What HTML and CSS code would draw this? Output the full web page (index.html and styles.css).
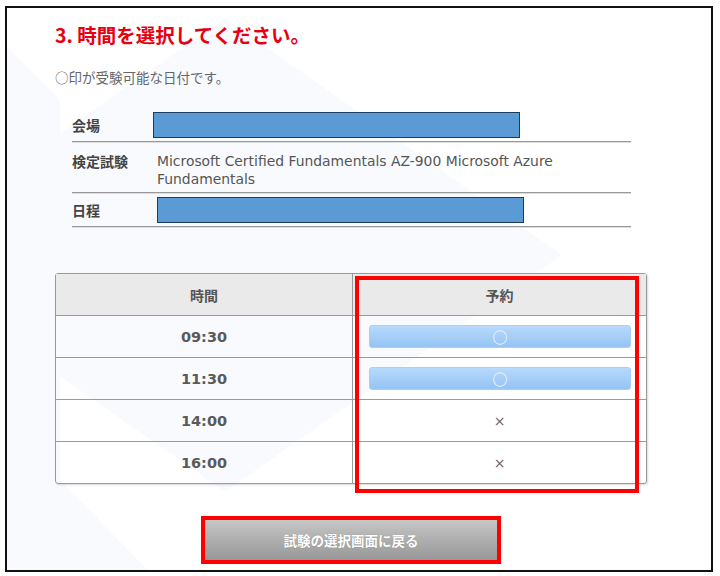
FILE: index.html
```html
<!DOCTYPE html>
<html lang="ja">

<head>
    <meta charset="UTF-8">
    <meta name="viewport" content="width=device-width, initial-scale=1.0">
    <title>時間選択</title>
    <link rel="stylesheet" href="styles.css">
</head>

<body>
    <div class="frame">
        <svg class="bg" width="704" height="562" viewBox="0 0 704 562">
            <polygon points="218,10 555,247 218,484 -120,247" fill="#f8fafd" />
            <polygon points="-7,32 53,92 53,472 143,564 -7,564" fill="#f8fafd" />
        </svg>
        <div class="content">
            <h2 class="title">3. 時間を選択してください。</h2>
            <p class="note">○印が受験可能な日付です。</p>

            <dl class="info">
                <div class="info-row">
                    <dt>会場</dt>
                    <dd><span class="mask mask-shift"></span></dd>
                </div>
                <div class="info-row info-top">
                    <dt>検定試験</dt>
                    <dd>Microsoft Certified Fundamentals AZ-900 Microsoft Azure Fundamentals</dd>
                </div>
                <div class="info-row">
                    <dt>日程</dt>
                    <dd><span class="mask"></span></dd>
                </div>
            </dl>

            <div class="slots">
                <table class="slot-table">
                    <thead>
                        <tr>
                            <th class="col-time">時間</th>
                            <th>予約</th>
                        </tr>
                    </thead>
                    <tbody>
                        <tr>
                            <td class="time">09:30</td>
                            <td><span class="slot-btn">○</span></td>
                        </tr>
                        <tr>
                            <td class="time">11:30</td>
                            <td><span class="slot-btn">○</span></td>
                        </tr>
                        <tr>
                            <td class="time">14:00</td>
                            <td class="full">×</td>
                        </tr>
                        <tr>
                            <td class="time">16:00</td>
                            <td class="full">×</td>
                        </tr>
                    </tbody>
                </table>
                <div class="mark"></div>
            </div>

            <button class="back-btn">試験の選択画面に戻る</button>
        </div>
    </div>
</body>

</html>
```

FILE: styles.css
```css
body {
    margin: 0;
    background: #fff;
    font-family: "DejaVu Sans", "Noto Sans CJK JP", sans-serif;
}

.frame {
    position: relative;
    width: 704px;
    height: 562px;
    margin: 6px 0 0 5px;
    border: 2px solid #111;
    overflow: hidden;
}

.bg {
    position: absolute;
    left: 0;
    top: 0;
}

.content {
    position: relative;
    width: 592px;
    padding: 15px 0 0 48px;
}

.title {
    margin: 0;
    font: bold 19.5px/24px "Noto Sans CJK JP", sans-serif;
    color: #e60012;
}

.note {
    margin: 20px 0 0;
    font: 13.5px/20px "Noto Sans CJK JP", sans-serif;
    color: #666;
}

/* exam info */
.info {
    margin: 21px 16px 0 17px;
}

.info-row {
    display: flex;
    align-items: center;
    padding: 4px 0 3px;
    border-bottom: 1px solid #999;
    box-shadow: 0 1px 0 #ddd;
}

.info-top {
    align-items: flex-start;
    padding: 10px 0 4px;
}

.info dt {
    width: 85px;
    flex: none;
    font: bold 14px/18px "Noto Sans CJK JP", sans-serif;
    color: #444;
}

.info dd {
    margin: 0;
    flex: 1;
    font: 13.9px/18px "DejaVu Sans", "Noto Sans CJK JP", sans-serif;
    color: #555;
}

.mask {
    display: block;
    width: 365px;
    height: 24px;
    background: #5b9bd5;
    border: 1px solid #1f3b5a;
}

.mask-shift {
    margin-left: -4px;
}

/* time table */
.slots {
    position: relative;
    margin-top: 46px;
}

.slot-table {
    width: 592px;
    border-collapse: separate;
    border-spacing: 0;
    border: 1px solid #9a9a9a;
    border-radius: 3px;
    box-shadow: 1px 1px 2px rgba(0, 0, 0, 0.15);
}

.slot-table th,
.slot-table td {
    height: 41px;
    padding: 0;
    text-align: center;
    border-top: 1px solid #9a9a9a;
}

.slot-table th + th,
.slot-table td + td {
    border-left: 1px solid #9a9a9a;
}

.slot-table thead th {
    border-top: 0;
    background: #eaeaea;
    font: bold 14px "Noto Sans CJK JP", sans-serif;
    color: #555;
}

.col-time {
    width: 296px;
}

.time {
    font: bold 14.5px "DejaVu Sans", sans-serif;
    color: #5a5a5a;
}

.slot-btn {
    display: block;
    height: 21px;
    margin: 0 15px 0 16px;
    border: 1px solid #a8cff7;
    border-radius: 3px;
    background: linear-gradient(#b8dafc, #95c3f3);
    font: 15px/21px "Noto Sans CJK JP", sans-serif;
    color: #fff;
}

.full {
    font: 14px "DejaVu Sans", sans-serif;
    color: #666;
}

.mark {
    position: absolute;
    left: 300px;
    top: 3px;
    width: 276px;
    height: 209px;
    border: 4px solid #f00;
}

.back-btn {
    display: block;
    width: 292px;
    height: 40px;
    margin: 36px auto 0;
    border: 0;
    border-radius: 0;
    background: linear-gradient(#c6c6c6, #979797);
    outline: 4px solid #f00;
    font: bold 13.5px "Noto Sans CJK JP", sans-serif;
    color: #fff;
    text-shadow: 0 0 1px rgba(0, 0, 0, 0.25);
}
```
